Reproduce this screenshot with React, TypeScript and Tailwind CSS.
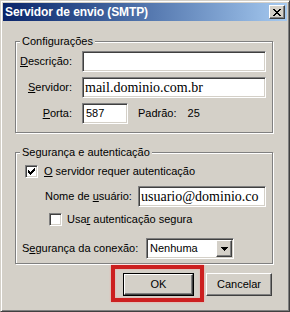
import React from "react";

const sunken =
  "border border-t-[#808080] border-l-[#808080] border-b-white border-r-white shadow-[inset_1px_1px_0_#404040,inset_-1px_-1px_0_#d4d0c8]";
const raised =
  "border border-t-white border-l-white border-b-[#404040] border-r-[#404040] shadow-[inset_-1px_-1px_0_#808080,inset_1px_1px_0_#d4d0c8]";
const etched =
  "border border-[#808080] shadow-[inset_1px_1px_0_#fff,1px_1px_0_#fff]";

function Check() {
  const pts: [number, number][] = [
    [7, 1],
    [6, 2], [7, 2],
    [1, 3], [5, 3], [6, 3], [7, 3],
    [1, 4], [2, 4], [4, 4], [5, 4], [6, 4],
    [1, 5], [2, 5], [3, 5], [4, 5], [5, 5],
    [2, 6], [3, 6], [4, 6],
    [3, 7],
  ];
  return (
    <svg width="9" height="9" viewBox="0 0 9 9" shapeRendering="crispEdges">
      {pts.map(([x, y], i) => (
        <rect key={i} x={x} y={y} width="1" height="1" fill="#000" />
      ))}
    </svg>
  );
}

function CheckBox({ checked }: { checked?: boolean }) {
  return (
    <div className={`w-[13px] h-[13px] flex-none bg-white flex items-center justify-center ${sunken}`}>
      {checked ? <Check /> : null}
    </div>
  );
}

function GroupBox({
  title,
  className,
  children,
}: {
  title: string;
  className: string;
  children: React.ReactNode;
}) {
  return (
    <div className={`relative w-[258px] ${etched} ${className}`}>
      <span className="absolute top-[-8px] left-[4px] px-[2px] bg-[#d4d0c8] leading-[14px] text-[11px]">
        {title}
      </span>
      {children}
    </div>
  );
}

export default function App() {
  return (
    <div className="w-[290px] h-[312px] bg-[#d4d0c8] border border-t-[#d4d0c8] border-l-[#d4d0c8] border-b-[#404040] border-r-[#404040] shadow-[inset_1px_1px_0_#fff,inset_-1px_-1px_0_#808080] p-[2px] flex flex-col font-['Liberation_Sans',Arial,sans-serif] text-[11px] text-black overflow-hidden">
      {/* Title bar */}
      <div className="h-[18px] flex-none flex items-center justify-between bg-gradient-to-r from-[#0a246a] to-[#a6caf0] pl-[2px] pr-[2px]">
        <span className="text-white font-bold text-[12px] leading-[18px] tracking-[-0.1px]">
          Servidor de envio (SMTP)
        </span>
        <div className={`w-[16px] h-[14px] bg-[#d4d0c8] flex items-center justify-center ${raised}`}>
          <svg width="8" height="7" viewBox="0 0 8 7" shapeRendering="crispEdges">
            <path d="M0 0h2v1h-2zM6 0h2v1h-2zM1 1h2v1h-2zM5 1h2v1h-2zM2 2h4v1h-4zM3 3h2v1h-2zM2 4h4v1h-4zM1 5h2v1h-2zM5 5h2v1h-2zM0 6h2v1h-2zM6 6h2v1h-2z" fill="#000" />
          </svg>
        </div>
      </div>

      <div className="flex flex-col pl-[12px]">
        {/* Configurações */}
        <GroupBox title="Configurações" className="mt-[20px] h-[92px] pt-[9px]">
          <div className="flex flex-col gap-[5px]">
            <div className="flex items-center h-[21px]">
              <span className="w-[56px] text-right">
                <u className="underline-offset-[1px]">D</u>escrição:
              </span>
              <div className={`ml-[10px] w-[184px] h-[21px] bg-white ${sunken}`} />
            </div>
            <div className="flex items-center h-[21px]">
              <span className="w-[56px] text-right">
                <u className="underline-offset-[1px]">S</u>ervidor:
              </span>
              <div className={`ml-[10px] w-[184px] h-[21px] bg-white pl-[2px] flex items-center font-['Liberation_Serif','Times_New_Roman',serif] text-[14px] ${sunken}`}>
                mail.dominio.com.br
              </div>
            </div>
            <div className="flex items-center h-[21px]">
              <span className="w-[56px] text-right">
                <u className="underline-offset-[1px]">P</u>orta:
              </span>
              <div className={`ml-[10px] w-[46px] h-[21px] bg-white pl-[3px] flex items-center ${sunken}`}>
                587
              </div>
              <span className="ml-[10px]">Padrão:</span>
              <span className="ml-[11px]">25</span>
            </div>
          </div>
        </GroupBox>

        {/* Segurança */}
        <GroupBox title="Segurança e autenticação" className="mt-[19px] h-[112px] pt-[12px] flex flex-col">
          <div className="h-[13px] flex items-center pl-[9px] gap-[6px]">
            <CheckBox checked />
            <span>
              <u className="underline-offset-[1px]">O</u> servidor requer autenticação
            </span>
          </div>
          <div className="mt-[8px] h-[21px] flex items-center pl-[29px] pr-[6px]">
            <span>
              Nome de <u className="underline-offset-[1px]">u</u>suário:
            </span>
            <div className={`ml-auto w-[128px] h-[21px] bg-white pl-[2px] flex items-center whitespace-nowrap overflow-hidden font-['Liberation_Serif','Times_New_Roman',serif] text-[14px] ${sunken}`}>
              usuario@dominio.co
            </div>
          </div>
          <div className="mt-[6px] h-[13px] flex items-center pl-[33px] gap-[5px]">
            <CheckBox />
            <span>
              Usa<u className="underline-offset-[1px]">r</u> autenticação segura
            </span>
          </div>
          <div className="mt-[12px] h-[21px] flex items-center pl-[6px]">
            <span className="w-[124px]">
              S<u className="underline-offset-[1px]">e</u>gurança da conexão:
            </span>
            <div className={`w-[88px] h-[21px] bg-white flex items-center justify-between pl-[3px] pr-[1px] ${sunken}`}>
              <span>Nenhuma</span>
              <div className={`w-[16px] h-[17px] bg-[#d4d0c8] flex items-center justify-center ${raised}`}>
                <svg width="7" height="4" viewBox="0 0 7 4" shapeRendering="crispEdges">
                  <path d="M0 0h7v1h-7zM1 1h5v1h-5zM2 2h3v1h-3zM3 3h1v1h-1z" fill="#000" />
                </svg>
              </div>
            </div>
          </div>
        </GroupBox>

        {/* Buttons */}
        <div className="mt-[9px] flex items-center pl-[108px] gap-[12px]">
          <div className="relative">
            <div className="w-[71px] h-[23px] border border-black">
              <div className={`w-full h-full bg-[#d4d0c8] flex items-center justify-center ${raised}`}>
                OK
              </div>
            </div>
            <div className="absolute left-[-12px] top-[-8px] w-[93px] h-[37px] border-[4px] border-[#cc1f1f] shadow-[0_0_2px_#f4a0a0,inset_0_0_2px_#f4a0a0]" />
          </div>
          <div className={`w-[66px] h-[23px] bg-[#d4d0c8] flex items-center justify-center ${raised}`}>
            Cancelar
          </div>
        </div>
      </div>
    </div>
  );
}
